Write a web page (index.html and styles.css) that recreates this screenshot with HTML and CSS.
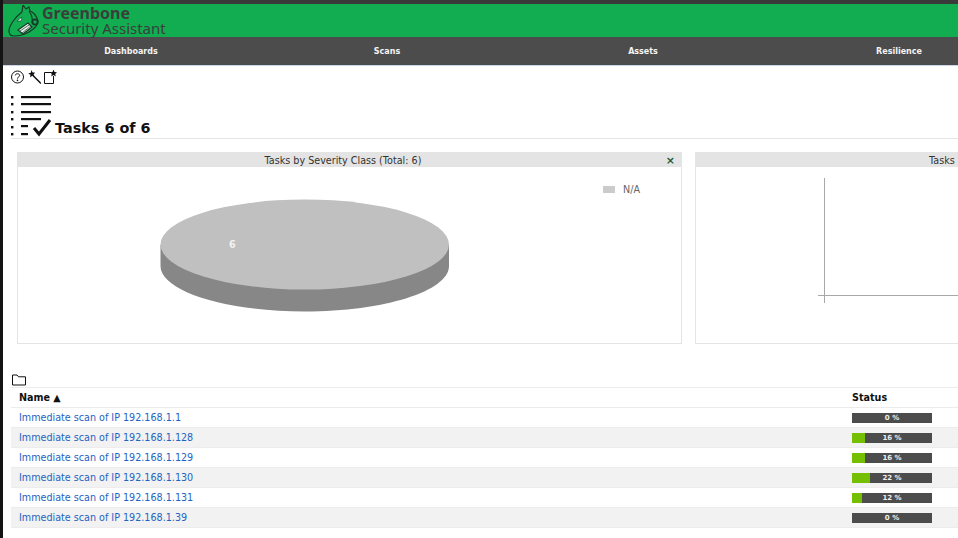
FILE: index.html
```html
<!DOCTYPE html>
<html lang="en">

<head>
  <meta charset="UTF-8">
  <title>Tasks - Greenbone Security Assistant</title>
  <link rel="stylesheet" href="styles.css">
</head>

<body>
  <div class="page">
    <header class="brand">
      <svg class="brand-logo" viewBox="0 0 32 32" width="32" height="32">
        <path d="M2 26 C2 21 8 12 15 7 L16 0 L19 4 L22 2 L23 6 C26 7 30 11 31 16 C31 20 27 24 22 27 C17 30 11 31 7 31 C4 31 2 29 2 26 Z" fill="#11ad50" stroke="#173a28" stroke-width="1.2"/>
        <path d="M11 25 L21 18 L25 22 L16 29 Z" fill="#e6f0e6" stroke="#173a28" stroke-width="1.2"/>
        <path d="M13 26 L22 20 M15 28 L24 21" stroke="#173a28" stroke-width=".7"/>
        <path d="M10 16 L15 12 L14 16 Z" fill="#f4f4f4" stroke="#173a28" stroke-width=".6"/>
        <path d="M22 6 C25 10 26 13 25 18" fill="none" stroke="#173a28" stroke-width="1.2"/>
        <circle cx="28" cy="17" r="2.6" fill="none" stroke="#173a28" stroke-width="1.8"/>
      </svg>
      <div class="brand-text">
        <div class="brand-name">Greenbone</div>
        <div class="brand-sub">Security Assistant</div>
      </div>
    </header>

    <nav class="menu">
      <a href="javascript:;">Dashboards</a>
      <a href="javascript:;">Scans</a>
      <a href="javascript:;">Assets</a>
      <a href="javascript:;">Resilience</a>
    </nav>

    <main class="content">
      <div class="tools">
        <svg viewBox="0 0 14 14" width="14" height="14">
          <circle cx="6.5" cy="7" r="6" fill="none" stroke="#111" stroke-width="1"/>
          <path d="M4.3 5.4 C4.3 3.2 8.7 3.2 8.7 5.4 C8.7 7 6.5 6.8 6.5 8.6" fill="none" stroke="#111" stroke-width="1"/>
          <circle cx="6.5" cy="10.4" r=".8" fill="#111"/>
        </svg>
        <svg viewBox="0 0 14 14" width="14" height="14">
          <path d="M6 5.5 L14 13.5" stroke="#111" stroke-width="1.5"/>
          <path d="M4.5 0 L5.6 2.4 L8 2.4 L6.6 4.4 L7.6 6.8 L5.2 5.8 L3.2 7.4 L3.4 4.8 L1.2 3.4 L3.8 2.8 Z" fill="#111"/>
        </svg>
        <svg viewBox="0 0 14 14" width="14" height="14">
          <path d="M8 2.5 H1.5 V13.5 H10.5 V6" fill="none" stroke="#111" stroke-width="1"/>
          <path d="M10.5 -.5 L11.5 2 L14 2.2 L12.2 3.9 L12.8 6.4 L10.5 5 L8.2 6.4 L8.8 3.9 L7 2.2 L9.5 2 Z" fill="#111"/>
        </svg>
      </div>

      <div class="title">
        <svg viewBox="0 0 41 42" width="41" height="42">
          <g fill="#111">
            <rect x="0" y="0" width="2.4" height="2.4"/>
            <rect x="0" y="7" width="2.4" height="2.4"/>
            <rect x="0" y="15" width="2.4" height="2.4"/>
            <rect x="0" y="22" width="2.4" height="2.4"/>
            <rect x="0" y="30" width="2.4" height="2.4"/>
            <rect x="0" y="37" width="2.4" height="2.4"/>
            <rect x="10" y="0" width="30" height="2.2"/>
            <rect x="10" y="7" width="30" height="2.2"/>
            <rect x="10" y="15" width="30" height="2.2"/>
            <rect x="10" y="22" width="20" height="2.2"/>
            <rect x="10" y="29" width="7" height="2.2"/>
            <rect x="10" y="37" width="7" height="2.2"/>
          </g>
          <path d="M23 32 L28 38 L39 24" fill="none" stroke="#111" stroke-width="3"/>
        </svg>
        <h1>Tasks 6 of 6</h1>
      </div>

      <section class="displays">
        <div class="display">
          <div class="display-head">
            Tasks by Severity Class (Total: 6)
            <span class="close">×</span>
          </div>
          <div class="display-body">
            <svg class="pie" viewBox="0 0 290 114" width="290" height="114">
              <path d="M.5 46 V67 C.5 92 65 112.5 144.5 112.5 C224 112.5 289 92 289 67 V46 Z" fill="#878787"/>
              <ellipse cx="144.75" cy="45.5" rx="144.25" ry="45" fill="#c0c0c0"/>
              <text x="69" y="49" class="pie-label">6</text>
            </svg>
            <div class="legend"><i></i>N/A</div>
          </div>
        </div>

        <div class="display display-cut">
          <div class="display-head">Tasks</div>
          <div class="display-body">
            <div class="axis-y"></div>
            <div class="axis-x"></div>
          </div>
        </div>
      </section>

      <div class="folder">
        <svg viewBox="0 0 14 12" width="14" height="12">
          <path d="M.5 11 V1 H5 L6.5 2.8 H13.5 V11 Z" fill="none" stroke="#111" stroke-width="1"/>
        </svg>
      </div>

      <table class="tasks">
        <thead>
          <tr>
            <th>Name ▲</th>
            <th class="status-col">Status</th>
          </tr>
        </thead>
        <tbody>
          <tr>
            <td><a href="javascript:;">Immediate scan of IP 192.168.1.1</a></td>
            <td class="status-col"><div class="bar"><i style="width: 0%"></i><span>0 %</span></div></td>
          </tr>
          <tr>
            <td><a href="javascript:;">Immediate scan of IP 192.168.1.128</a></td>
            <td class="status-col"><div class="bar"><i style="width: 16%"></i><span>16 %</span></div></td>
          </tr>
          <tr>
            <td><a href="javascript:;">Immediate scan of IP 192.168.1.129</a></td>
            <td class="status-col"><div class="bar"><i style="width: 16%"></i><span>16 %</span></div></td>
          </tr>
          <tr>
            <td><a href="javascript:;">Immediate scan of IP 192.168.1.130</a></td>
            <td class="status-col"><div class="bar"><i style="width: 22%"></i><span>22 %</span></div></td>
          </tr>
          <tr>
            <td><a href="javascript:;">Immediate scan of IP 192.168.1.131</a></td>
            <td class="status-col"><div class="bar"><i style="width: 12%"></i><span>12 %</span></div></td>
          </tr>
          <tr>
            <td><a href="javascript:;">Immediate scan of IP 192.168.1.39</a></td>
            <td class="status-col"><div class="bar"><i style="width: 0%"></i><span>0 %</span></div></td>
          </tr>
        </tbody>
      </table>
    </main>
  </div>
</body>

</html>
```

FILE: styles.css
```css
html,
body {
  margin: 0;
  padding: 0;
  width: 958px;
  height: 538px;
  overflow: hidden;
  background-color: #141414;
  font-family: "DejaVu Sans", sans-serif;
  font-size: 9.6px;
  color: #111;
}

.page {
  margin-left: 3px;
  height: 534px;
  border-top: 4px solid #3a3a3a;
  background-color: #fff;
}

.brand {
  display: flex;
  align-items: center;
  gap: 3px;
  height: 33px;
  padding-left: 4px;
  background-color: #11ad50;
}

.brand-text {
  color: #3a3f3c;
}

.brand-name {
  font-family: "Noto Sans", sans-serif;
  font-size: 16px;
  font-weight: bold;
  line-height: 15px;
}

.brand-sub {
  font-family: "Noto Sans", sans-serif;
  font-size: 15px;
  line-height: 15px;
}

.menu {
  display: flex;
  height: 28px;
  border-bottom: 1px solid #c9d6ea;
  background-color: #4c4c4c;
}

.menu a {
  flex: 0 0 256px;
  padding-top: 1px;
  font-size: 8px;
  font-weight: bold;
  line-height: 27px;
  text-align: center;
  text-decoration: none;
  color: #f3f3f3;
}

.content {
  padding: 4px 0 0 8px;
}

.tools {
  display: flex;
  gap: 2px;
  height: 24px;
}

.title {
  display: flex;
  align-items: flex-end;
  gap: 3px;
  height: 42px;
  margin-top: 2px;
  border-bottom: 1px solid #e4e4e4;
}

.title h1 {
  margin: 0 0 2px;
  font-size: 14.4px;
  font-weight: bold;
}

.displays {
  display: flex;
  gap: 13px;
  margin: 13px 0 0 6px;
  width: 950px;
}

.display {
  flex: 0 0 665px;
  height: 192px;
  box-sizing: border-box;
  border: 1px solid #e4e4e4;
}

.display-cut {
  flex: 0 0 500px;
}

.display-head {
  position: relative;
  height: 14px;
  padding-right: 13px;
  background-color: #e4e4e4;
  font-size: 9.6px;
  line-height: 16px;
  text-align: center;
  color: #333;
}

.display-cut .display-head {
  padding: 0 0 0 233px;
  text-align: left;
}

.close {
  position: absolute;
  right: 6px;
  top: 0;
  font-size: 11px;
  font-weight: bold;
  color: #1c5c34;
}

.display-body {
  position: relative;
  height: 175px;
}

.pie {
  position: absolute;
  left: 142px;
  top: 32px;
}

.pie-label {
  font-family: "DejaVu Sans", sans-serif;
  font-size: 9.6px;
  font-weight: bold;
  fill: #f2f2f2;
}

.legend {
  position: absolute;
  left: 585px;
  top: 17px;
  display: flex;
  align-items: center;
  gap: 8px;
  font-size: 9.6px;
  color: #666;
}

.legend i {
  width: 12px;
  height: 7px;
  background-color: #cbcbcb;
}

.axis-y {
  position: absolute;
  left: 128px;
  top: 11px;
  width: 1px;
  height: 125px;
  background-color: #a8a8a8;
}

.axis-x {
  position: absolute;
  left: 122px;
  top: 128px;
  width: 380px;
  height: 1px;
  background-color: #a8a8a8;
}

.folder {
  height: 13px;
  margin-top: 30px;
  padding-left: 1px;
}

.tasks {
  width: 947px;
  border-collapse: collapse;
  table-layout: fixed;
  font-size: 9.6px;
}

.tasks th {
  height: 19px;
  padding: 0 0 0 8px;
  border-top: 1px solid #ececec;
  border-bottom: 1px solid #ececec;
  text-align: left;
  font-weight: bold;
  color: #111;
}

.tasks td {
  height: 19px;
  padding: 0 0 0 8px;
  border-bottom: 1px solid #ececec;
}

.tasks tbody tr:nth-child(even) {
  background-color: #f2f2f2;
}

.tasks .status-col {
  width: 106px;
  padding-left: 0;
}

.tasks a {
  color: #1d63c4;
  text-decoration: none;
}

.bar {
  position: relative;
  width: 80px;
  height: 10px;
  background-color: #4c4c4c;
}

.bar i {
  display: block;
  height: 100%;
  background-color: #74c000;
}

.bar span {
  position: absolute;
  left: 0;
  right: 0;
  top: 0;
  font-size: 7px;
  font-weight: bold;
  line-height: 10px;
  text-align: center;
  color: #eee;
}
```
